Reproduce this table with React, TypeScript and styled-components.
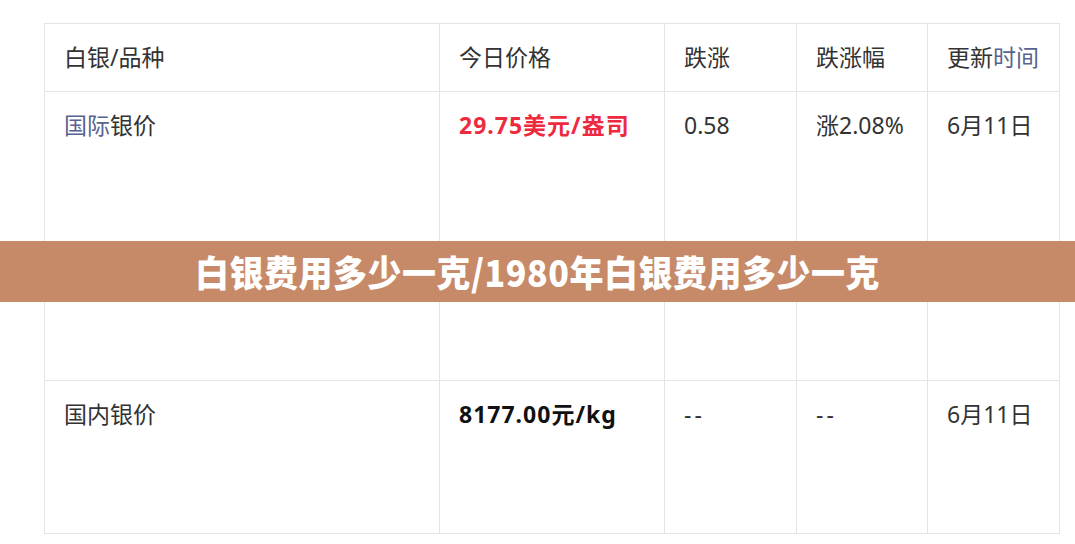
import styled, { createGlobalStyle } from 'styled-components';

const GlobalStyle = createGlobalStyle`
	html, body {
		margin: 0;
		padding: 0;
		background: #fff;
	}
	body {
		font-family: "Noto Sans", "Noto Sans CJK SC", sans-serif;
		color: #333;
	}
`

const Page = styled.div`
	position: relative;
	width: 1075px;
	height: 544px;
	padding: 23px 0 0 44px;
	box-sizing: border-box;
	overflow: hidden;
`

const PriceTable = styled.table`
	border-collapse: collapse;
	table-layout: fixed;
	width: 1015px;
	font-size: 23px;
	line-height: 26px;

	th, td {
		border: 1px solid #e4e4e4;
		padding: 20px 19px;
		text-align: left;
		vertical-align: top;
		font-weight: normal;
		white-space: nowrap;
	}
`

const HeadRow = styled.tr`
	height: 68px;

	th {
		vertical-align: middle;
		padding-top: 0;
		padding-bottom: 2px;
	}
`

const BodyRow = styled.tr<{ $h: number }>`
	height: ${props => props.$h}px;
`

const Link = styled.span`
	color: #56648f;
`

const Price = styled.span<{ $red?: boolean }>`
	font-weight: bold;
	letter-spacing: 1px;
	color: ${props => (props.$red ? '#ee2a3f' : '#111')};
`

const Dash = styled.span`
	letter-spacing: 3px;
`

const Banner = styled.div`
	position: absolute;
	left: 0;
	right: 0;
	top: 241px;
	height: 61px;
	display: flex;
	align-items: center;
	justify-content: center;
	background: rgba(197, 134, 100, 0.97);
	color: #fff;
	font-family: "Noto Sans CJK SC", sans-serif;
	font-size: 34px;
	font-weight: 900;
	letter-spacing: 0.5px;
`

const BannerText = styled.span`
	display: inline-block;
	transform: scaleY(1.08);
`

const columns = [395, 225, 132, 131, 132];

export default function App() {
	return (
		<Page>
			<GlobalStyle />
			<PriceTable>
				<colgroup>
					{columns.map((w, i) => (
						<col key={i} style={{ width: w }} />
					))}
				</colgroup>
				<thead>
					<HeadRow>
						<th>白银/品种</th>
						<th>今日价格</th>
						<th>跌涨</th>
						<th>跌涨幅</th>
						<th>更新<Link>时间</Link></th>
					</HeadRow>
				</thead>
				<tbody>
					<BodyRow $h={289}>
						<td><Link>国际</Link>银价</td>
						<td><Price $red>29.75美元/盎司</Price></td>
						<td>0.58</td>
						<td>涨2.08%</td>
						<td>6月11日</td>
					</BodyRow>
					<BodyRow $h={153}>
						<td>国内银价</td>
						<td><Price>8177.00元/kg</Price></td>
						<td><Dash>--</Dash></td>
						<td><Dash>--</Dash></td>
						<td>6月11日</td>
					</BodyRow>
				</tbody>
			</PriceTable>
			<Banner>
				<BannerText>白银费用多少一克/1980年白银费用多少一克</BannerText>
			</Banner>
		</Page>
	);
}
